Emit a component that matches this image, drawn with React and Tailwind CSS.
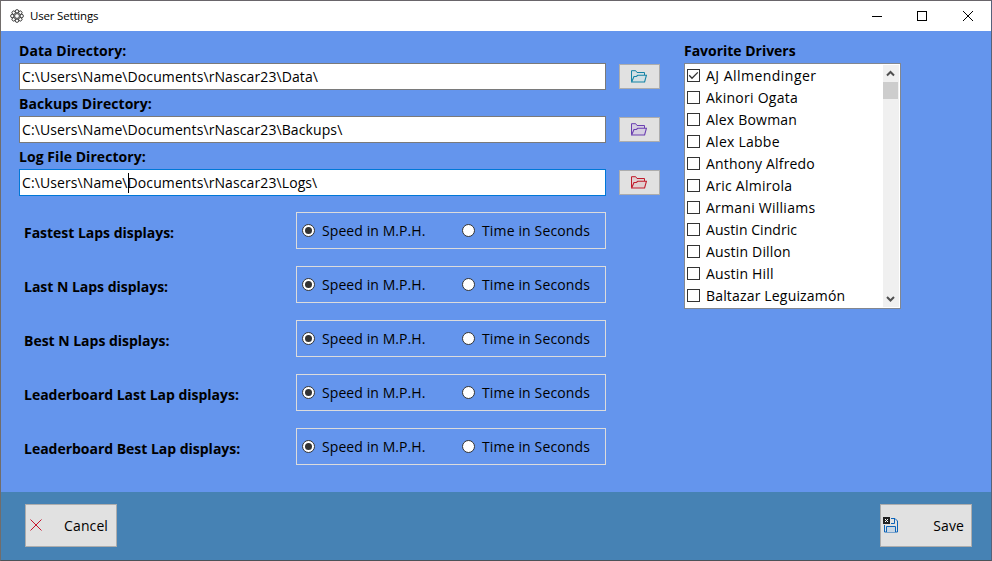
import React from 'react';

const fields = [
  { label: 'Data Directory:', before: 'C:\\Users\\Name\\', after: 'Documents\\rNascar23\\Data\\', color: '#1583a5', fill: '#d2e0e5' },
  { label: 'Backups Directory:', before: 'C:\\Users\\Name\\', after: 'Documents\\rNascar23\\Backups\\', color: '#6b3fb0', fill: '#d6cfe2' },
  { label: 'Log File Directory:', before: 'C:\\Users\\Name\\', after: 'Documents\\rNascar23\\Logs\\', color: '#c01b2b', fill: '#e2cfd0', focused: true },
];

const displays = ['Fastest Laps displays:', 'Last N Laps displays:', 'Best N Laps displays:', 'Leaderboard Last Lap displays:', 'Leaderboard Best Lap displays:'];

const drivers = [
  ['AJ Allmendinger', 'tracking-[0.47px]'],
  ['Akinori Ogata', 'tracking-[0.25px]'],
  ['Alex Bowman', 'tracking-[0.2px]'],
  ['Alex Labbe', 'tracking-[0.25px]'],
  ['Anthony Alfredo', 'tracking-[0.17px]'],
  ['Aric Almirola', 'tracking-[0.28px]'],
  ['Armani Williams', 'tracking-[0.25px]'],
  ['Austin Cindric', 'tracking-[0.05px]'],
  ['Austin Dillon', 'tracking-[0.17px]'],
  ['Austin Hill', 'tracking-[0.17px]'],
  ['Baltazar Leguizamón', 'tracking-[0.17px]'],
];

function Gear() {
  return (
    <svg width="14" height="14" viewBox="0 0 14 14" fill="none" stroke="#333" strokeWidth="1">
      {[0, 45, 90, 135, 180, 225, 270, 315].map((a) => (
        <circle key={a} transform={`rotate(${a} 7 7)`} cx="7" cy="2.3" r="1.7" stroke="#2c2c2c" strokeWidth=".9" />
      ))}
      <circle cx="7" cy="7" r="2.4" strokeWidth=".9" />
    </svg>
  );
}

function Folder({ color, fill }) {
  return (
    <svg className="mr-[2px]" width="16" height="13" viewBox="0 0 16 13" fill="none" stroke={color}>
      <path d="M.5 11.5V.7h4.2l1.3 1.8h7.5v2.7" fill={fill} />
      <path d="M.6 12 3 6.5h2.3l1.5-1.2h8.6L13.6 12z" fill={fill} strokeWidth="1.1" />
    </svg>
  );
}

function Radio({ checked }) {
  return (
    <svg className="mb-px shrink-0" width="13" height="13" viewBox="0 0 13 13">
      <circle cx="6.5" cy="6.5" r="6" fill="white" stroke="#333" />
      {checked && <circle cx="6.5" cy="6.5" r="3.5" fill="#333" />}
    </svg>
  );
}

function Check({ checked }) {
  return (
    <svg className="mb-px shrink-0" width="13" height="13" viewBox="0 0 13 13" fill="none" stroke="#333">
      <rect x=".5" y=".5" width="12" height="12" fill="white" />
      {checked && <path d="M2.2 6.3 5 9.2l5.8-5.8" strokeWidth="1.3" />}
    </svg>
  );
}

function WindowControls() {
  return (
    <svg width="119" height="29" viewBox="0 0 119 29" fill="none" stroke="black">
      <path d="M0 14.5h10" />
      <rect x="45.5" y="9.5" width="9" height="9" />
      <path d="m91 9 10 10M101 9 91 19" />
    </svg>
  );
}

export default function App() {
  return (
    <div className="flex h-[561px] w-[992px] flex-col overflow-hidden border border-t-[#69656a] border-r-[#55627a] border-b-[#4b5258] border-l-[#716d6b] font-['Open_Sans','Noto_Sans',sans-serif] text-[14px] leading-[20px] text-black">
      <header className="flex h-[30px] shrink-0 items-center bg-white pl-[9px]">
        <Gear />
        <span className="ml-[6px] text-[11.5px] tracking-[-0.18px]">User Settings</span>
        <div className="ml-auto"><WindowControls /></div>
      </header>

      <main className="flex h-[461px] shrink-0 bg-[#6495ed] pt-[6px] pl-[18px]">
        <div className="w-[641px]">
          {fields.map((f) => (
            <div key={f.label}>
              <div className="h-[26px] pt-[4px] font-bold tracking-[0.05px]">{f.label}</div>
              <div className="flex h-[27px] items-center justify-between">
                <div className={`flex h-[27px] w-[587px] items-center border bg-white pl-[2px] tracking-[0.1px] ${f.focused ? 'border-[#0078d7]' : 'border-[#7a7a7a]'}`}>
                  <span>{f.before}</span>
                  {f.focused && <span className="-mr-px h-[20px] w-px bg-black" />}
                  <span>{f.after}</span>
                </div>
                <button className="flex h-[25px] w-[41px] items-center justify-center border border-[#adadad] bg-[#e1e1e1]">
                  <Folder color={f.color} fill={f.fill} />
                </button>
              </div>
            </div>
          ))}
          <div className="mt-[16px] flex w-[587px] flex-col gap-[17px] pl-[5px]">
            {displays.map((d) => (
              <div key={d} className="flex h-[37px] items-center justify-between">
                <span className="pt-[4px] font-bold tracking-[-0.02px]">{d}</span>
                <div className="flex h-[37px] w-[310px] items-center border border-[#dcdcdc] pl-[5px]">
                  <label className="flex w-[160px] items-center gap-[7px] whitespace-nowrap tracking-[0.08px]"><Radio checked /><span>Speed in M.P.H.</span></label>
                  <label className="flex items-center gap-[7px] whitespace-nowrap tracking-[0.14px]"><Radio /><span>Time in Seconds</span></label>
                </div>
              </div>
            ))}
          </div>
        </div>

        <div className="ml-[24px] w-[217px]">
          <div className="h-[26px] pt-[4px] font-bold tracking-[-0.02px]">Favorite Drivers</div>
          <div className="flex h-[246px] justify-between border border-[#828790] bg-white p-px">
            <ul className="pl-px">
              {drivers.map(([name, spacing], i) => (
                <li key={name} className="flex h-[22px] items-center gap-[6px] whitespace-nowrap"><Check checked={i === 0} /><span className={spacing}>{name}</span></li>
              ))}
            </ul>
            <div className="flex w-[16px] flex-col items-start bg-[#f0f0f0]">
              <svg width="16" height="17" viewBox="0 0 16 17" fill="none" stroke="#505050" strokeWidth="2"><path d="m4 10.5 3.5-3.5 3.5 3.5" /></svg>
              <div className="h-[17px] w-[15px] bg-[#cdcdcd]" />
              <svg className="mt-auto" width="16" height="17" viewBox="0 0 16 17" fill="none" stroke="#505050" strokeWidth="2"><path d="m4 7 3.5 3.5L11 7" /></svg>
            </div>
          </div>
        </div>
      </main>

      <footer className="flex h-[68px] shrink-0 items-start justify-between bg-[#4682b4] pt-[12px] pr-[19px] pl-[24px]">
        <button className="flex h-[43px] w-[92px] items-center justify-between border border-[#adadad] bg-[#e1e1e1] pr-[8px] pl-[4px] tracking-[0.1px]">
          <svg className="mb-[2px]" width="12" height="12" viewBox="0 0 12 12" fill="none" stroke="#c5162e" strokeWidth="1"><path d="m.5.5 11 11m0-11-11 11" /></svg>
          <span>Cancel</span>
        </button>
        <button className="flex h-[43px] w-[92px] items-center justify-between border border-[#adadad] bg-[#e1e1e1] pr-[7px] pl-[2px] tracking-[0.1px]">
          <svg className="mb-[2px]" width="15" height="16" viewBox="0 0 15 16" fill="none">
            <path d="M8 1.5h4l2.5 2.5v11H1.5V8M11.5 1.5v5H8" stroke="#0b63b8" />
            <path d="M3.5 15V9.5h9V15" fill="#c8d6e4" stroke="#0b63b8" />
            <path d="M0 0h7v7H0z" fill="#222" />
            <path d="m2 2 3 3m0-3L2 5" stroke="white" />
          </svg>
          <span>Save</span>
        </button>
      </footer>
    </div>
  );
}
